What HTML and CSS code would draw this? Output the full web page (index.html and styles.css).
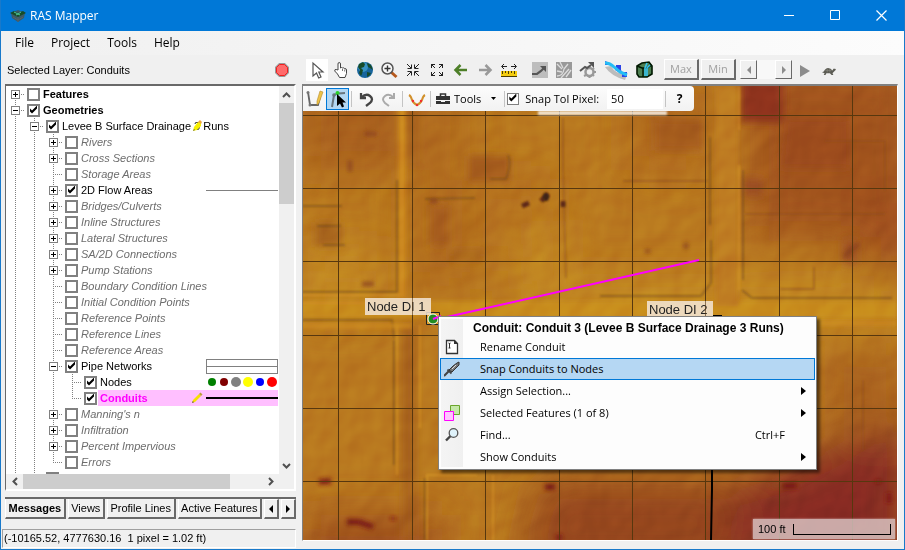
FILE: index.html
```html
<!DOCTYPE html>
<html lang="en">
<head>
<meta charset="utf-8">
<title>RAS Mapper</title>
<link rel="stylesheet" href="styles.css">
</head>
<body>
<div class="window">
  <header class="titlebar">
    <svg class="logo" width="16" height="12" viewBox="0 0 16 12"><path d="M1 3l7-3 7 3-1 5-6 4-6-4z" fill="#3a5a68"/><path d="M0 3l4-2 4 2 5-2 3 2-8 4z" fill="#164d28"/><path d="M4 2l4 2 3-2M6 5l2-1 2 1" stroke="#4ec49a" fill="none"/><path d="M3 7l5 3 5-3M8 7v5" stroke="#54636a" fill="none"/></svg>
    <h1>RAS Mapper</h1>
    <div class="winbtns">
      <button aria-label="Minimize"><svg width="11" height="11"><path d="M0 5.500h10" stroke="#fff"/></svg></button>
      <button aria-label="Maximize"><svg width="11" height="11"><path d="M.5.5h9v9h-9z" stroke="#fff" fill="none"/></svg></button>
      <button aria-label="Close"><svg width="11" height="11"><path d="M.5.5l10 10M10.500.5l-10 10" stroke="#fff" stroke-width="1.2"/></svg></button>
    </div>
  </header>
  <nav class="menubar"><button>File</button><button>Project</button><button>Tools</button><button>Help</button></nav>
  <main class="main">
    <section class="side">
      <div class="selected"><span>Selected Layer: Conduits</span>
        <svg width="14" height="14" viewBox="0 0 14 14"><path d="M4.500 1h5L13 4.500v5L9.500 13h-5L1 9.500v-5z" fill="#ff6b6b" stroke="#999" stroke-width="2"/><path d="M4.500 1.500h5l3 3v5l-3 3h-5l-3-3v-5z" fill="#ff6b6b" stroke="#f02020"/></svg>
      </div>
      <div class="treebox">
        <div class="tree">
          <ul class="root">
            <li><div class="row"><button class="exp" aria-label="Expand"></button><label><input type="checkbox"><b>Features</b></label></div></li>
            <li><div class="row"><button class="exp minus" aria-label="Collapse"></button><label><input type="checkbox" checked><b>Geometries</b></label></div>
              <ul>
                <li><div class="row"><button class="exp minus" aria-label="Collapse"></button><label><input type="checkbox" checked>Levee B Surface Drainage 3 Runs</label>
                  <svg class="pencil over" width="12" height="12" viewBox="0 0 12 12"><path d="M2 11l1-4 4-5 3 1v3l-4 4z" fill="#f7f000"/><path d="M7 2l2-2 2 2-1 2z" fill="#f2a83c"/><path d="M2 11l1-2 1 1z" fill="#555"/></svg></div>
                  <ul>
                    <li><div class="row off"><button class="exp" aria-label="Expand"></button><label><input type="checkbox">Rivers</label></div></li>
                    <li><div class="row off"><button class="exp" aria-label="Expand"></button><label><input type="checkbox">Cross Sections</label></div></li>
                    <li><div class="row off leaf"><label><input type="checkbox">Storage Areas</label></div></li>
                    <li><div class="row"><button class="exp" aria-label="Expand"></button><label><input type="checkbox" checked>2D Flow Areas</label><span class="legend thin"></span></div></li>
                    <li><div class="row off"><button class="exp" aria-label="Expand"></button><label><input type="checkbox">Bridges/Culverts</label></div></li>
                    <li><div class="row off"><button class="exp" aria-label="Expand"></button><label><input type="checkbox">Inline Structures</label></div></li>
                    <li><div class="row off"><button class="exp" aria-label="Expand"></button><label><input type="checkbox">Lateral Structures</label></div></li>
                    <li><div class="row off"><button class="exp" aria-label="Expand"></button><label><input type="checkbox">SA/2D Connections</label></div></li>
                    <li><div class="row off"><button class="exp" aria-label="Expand"></button><label><input type="checkbox">Pump Stations</label></div></li>
                    <li><div class="row off leaf"><label><input type="checkbox">Boundary Condition Lines</label></div></li>
                    <li><div class="row off leaf"><label><input type="checkbox">Initial Condition Points</label></div></li>
                    <li><div class="row off leaf"><label><input type="checkbox">Reference Points</label></div></li>
                    <li><div class="row off leaf"><label><input type="checkbox">Reference Lines</label></div></li>
                    <li><div class="row off leaf"><label><input type="checkbox">Reference Areas</label></div></li>
                    <li><div class="row"><button class="exp minus" aria-label="Collapse"></button><label><input type="checkbox" checked>Pipe Networks</label><span class="legend box"></span></div>
                      <ul>
                        <li><div class="row leaf"><label><input type="checkbox" checked>Nodes</label>
                          <svg class="legend" width="72" height="12"><circle cx="6" cy="6" r="4" fill="#008000"/><circle cx="18" cy="6" r="4" fill="#800000"/><circle cx="30" cy="6" r="5" fill="#808080"/><circle cx="42" cy="6" r="5" fill="#ff0"/><circle cx="54" cy="6" r="4" fill="#00f"/><circle cx="66" cy="6" r="5" fill="#f00"/></svg></div></li>
                        <li><div class="row leaf active"><label><input type="checkbox" checked><b>Conduits</b></label>
                          <svg class="pencil" width="12" height="12" viewBox="0 0 12 12"><path d="M1 11l1-3 6-6 2 2-6 6z" fill="#f7e000"/><path d="M8 2l1.500-1.500 2 2L10 4z" fill="#b9a03a"/><path d="M1 11l.8-2 1.200 1.200z" fill="#555"/></svg><span class="legend thick"></span></div></li>
                      </ul></li>
                    <li><div class="row off"><button class="exp" aria-label="Expand"></button><label><input type="checkbox">Manning's n</label></div></li>
                    <li><div class="row off"><button class="exp" aria-label="Expand"></button><label><input type="checkbox">Infiltration</label></div></li>
                    <li><div class="row off"><button class="exp" aria-label="Expand"></button><label><input type="checkbox">Percent Impervious</label></div></li>
                    <li><div class="row off leaf"><label><input type="checkbox">Errors</label></div></li>
                  </ul></li>
                <li><div class="row leaf"><label><input type="checkbox"></label></div></li>
              </ul></li>
          </ul>
        </div>
        <div class="vbar"><button aria-label="Up"><svg width="9" height="6"><path d="M1 5l3.500-3.500L8 5" class="chev"/></svg></button><i></i><button aria-label="Down"><svg width="9" height="6"><path d="M1 1l3.500 3.500L8 1" class="chev"/></svg></button></div>
        <div class="hbar"><button aria-label="Left"><svg width="6" height="9"><path d="M5 1L1.500 4.500 5 8" class="chev"/></svg></button><i></i><button aria-label="Right"><svg width="6" height="9"><path d="M1 1l3.500 3.500L1 8" class="chev"/></svg></button></div>
      </div>
      <div class="tabs"><button class="on">Messages</button><button>Views</button><button>Profile Lines</button><button>Active Features</button><button class="arrow" aria-label="Previous tab"><svg width="4" height="8"><path d="M4 0v8L0 4z"/></svg></button><button class="arrow" aria-label="Next tab"><svg width="4" height="8"><path d="M0 0v8l4-4z"/></svg></button></div>
      <div class="status">(-10165.52, 4777630.16&nbsp; 1 pixel = 1.02 ft)</div>
    </section>
    <section class="view">
      <div class="toolbar">
        <button class="tool picked" aria-label="Select"><svg width="22" height="22"><path d="M7 4v13l3.500-3 2.200 5 2.300-1-2.200-5H17z" fill="#fff" stroke="#555" stroke-width="1.200"/></svg></button>
        <button class="tool" aria-label="Pan"><svg width="22" height="22"><path d="M8 11V5q0-1.500 1.200-1.500T10.500 5v4q1-1 2.200 0 1.200-.6 2 .6 1.800-.2 1.800 1.400v3.500l-1.500 4H9.500L7.500 15l-2.800-3q0-2 1.500-1.500z" fill="#fff" stroke="#444"/><path d="M12.500 10v2M14.700 10.500v2" stroke="#777"/></svg></button>
        <button class="tool" aria-label="World"><svg width="22" height="22"><circle cx="11" cy="11" r="8" fill="#17659c"/><circle cx="9" cy="8" r="5" fill="#4fb3dd" opacity=".6"/><path d="M5 5l4-2 2 2-1 3-3 1 2 2-1 4-1 2-2-3 1-3-2-3zM13 4l4 2 2 5-3-2-2-1zM13 13l4 1-1 2-3 2z" fill="#174b2a"/></svg></button>
        <button class="tool" aria-label="Zoom"><svg width="22" height="22"><path d="M13.500 13.500l5 4.500" stroke="#b5581c" stroke-width="3"/><circle cx="9.500" cy="9.500" r="5.500" fill="#f8f8f8" stroke="#555" stroke-width="1.500"/><path d="M6.500 9.500h6M9.500 6.500v6" stroke="#333" stroke-width="1.400"/></svg></button>
        <button class="tool" aria-label="Zoom in"><svg width="22" height="22"><path d="M5 5l4 4M5.500 9.500h4v-4M17 5l-4 4M12.500 5.500v4h4M5 17l4-4M5.500 12.500h4v4M17 17l-4-4M16.500 12.500h-4v4" class="ln"/></svg></button>
        <button class="tool" aria-label="Zoom out"><svg width="22" height="22"><path d="M5 5l4 4M5.500 9V5.500H9M17 5l-4 4M13 5.500h3.500V9M5 17l4-4M5.500 13v3.500H9M17 17l-4-4M16.500 13v3.500H13" class="ln"/></svg></button>
        <button class="tool" aria-label="Back"><svg width="22" height="22"><path d="M17 11H6M10.500 6l-5 5 5 5" fill="none" stroke="#4d7f28" stroke-width="2.500"/></svg></button>
        <button class="tool" aria-label="Forward"><svg width="22" height="22"><path d="M5 11h11M11.500 6l5 5-5 5" fill="none" stroke="#999" stroke-width="2.500"/></svg></button>
        <button class="tool" aria-label="Measure"><svg width="22" height="22"><path d="M4 7.500h5M13 7.500h5M6 5L3.500 7.500 6 10M16 5l2.500 2.500L16 10" class="ln"/><path d="M3 12h16v6H3z" fill="#f3cc10"/><path d="M4.500 12v3M7.500 12v2M10.500 12v3M13.500 12v2M16.500 12v3M3 17.500h16" stroke="#4b3c00" fill="none"/></svg></button>
        <span class="space"></span>
        <button class="tool" aria-label="Profile"><svg width="22" height="22"><path d="M3 3h16v16H3z" fill="#bdbdbd"/><path d="M3 15h5l4-3 4-4" stroke="#555" stroke-width="2.200" fill="none"/><path d="M11 7h6v6z" fill="#555"/></svg></button>
        <button class="tool" aria-label="Velocity"><svg width="22" height="22"><path d="M3 3h16v16H3z" fill="#999"/><path d="M4 5l5 5M7 3l3 6M4 17q6 0 7-7l4-5M8 19l8-9M13 18l5-7M4 12l5 1" stroke="#ddd" fill="none" stroke-width="1.300"/></svg></button>
        <button class="tool" aria-label="Tracing"><svg width="22" height="22"><circle cx="12.500" cy="13" r="4" fill="none" stroke="#999" stroke-width="2.500"/><path d="M12.500 7v2M12.500 17v2M17 13h2M7 17l2-1M17 17l-1-1M17 9l-1 1" stroke="#999" stroke-width="2"/><path d="M3 12l5-4 2 1 4-3" stroke="#555" stroke-width="2" fill="none"/><path d="M11 3h6v6z" fill="#555"/></svg></button>
        <button class="tool wide" aria-label="Water surface"><svg width="24" height="22"><path d="M1 8q6 9 20 13l2-5q-12-1-16-9z" fill="#999" opacity=".6"/><path d="M12 6h5v5h-5zM18 13h5v5h-5z" fill="#2b43e8"/><path d="M1 2v4h5V4zM11 8l7 4v3l-7-4z" fill="#2b43e8"/><path d="M1 4q5 0 9 4l6 5 7 3" stroke="#24bdf5" stroke-width="3" fill="none"/></svg></button>
        <button class="tool" aria-label="Terrain"><svg width="22" height="22"><path d="M4 7l5-3 7-1 3 4v8l-5 3H6l-2-3z" fill="#4f8052" stroke="#001800" stroke-width="1.600"/><path d="M4 7l5 2h5l5-3M10 9v9" stroke="#001800" stroke-width="1.400" fill="none"/><path d="M14 4l-2 5v8M17 6l-3 3v8" stroke="#36c4ee" stroke-width="1.600" fill="none"/></svg></button>
        <span class="space"></span>
        <button class="classic" disabled>Max</button><button class="classic" disabled>Min</button>
        <span class="spin"><button disabled aria-label="Step back"><svg width="4" height="8"><path d="M4 0v8L0 4z"/></svg></button><i></i><button disabled aria-label="Step forward"><svg width="4" height="8"><path d="M0 0v8l4-4z"/></svg></button></span>
        <button class="tool play" aria-label="Play"><svg width="10" height="12"><path d="M0 0v12l10-6z" fill="#8c8c8c"/></svg></button>
        <button class="tool speed" aria-label="Speed"><svg width="14" height="8" viewBox="0 0 16 9"><path d="M0 6l2-1q2-4 5-4t5 3l1-2h2l1 1-1 1-2 2-1 1 1 2h-2L9 7H5L4 9H2l1-2z" fill="#5c5c54"/><path d="M4 4h7M6 2v4M9 2v4" stroke="#8a8a80" stroke-width=".7"/></svg></button>
      </div>
      <div class="map">
        <svg class="terrain" viewBox="303 86 594 454" preserveAspectRatio="xMinYMin slice">
          <defs>
            <filter id="b1" x="-50%" y="-50%" width="200%" height="200%"><feGaussianBlur stdDeviation="1"/></filter>
            <filter id="b2" x="-50%" y="-50%" width="200%" height="200%"><feGaussianBlur stdDeviation="2"/></filter>
            <filter id="b4" x="-50%" y="-50%" width="200%" height="200%"><feGaussianBlur stdDeviation="4"/></filter>
            <filter id="b25" x="-80%" y="-80%" width="260%" height="260%"><feGaussianBlur stdDeviation="20"/></filter>
            <filter id="relief" x="0" y="0" width="100%" height="100%" color-interpolation-filters="sRGB"><feTurbulence type="fractalNoise" baseFrequency=".04" numOctaves="2" seed="8"/><feDiffuseLighting surfaceScale="3" lighting-color="#fff"><feDistantLight azimuth="225" elevation="30"/></feDiffuseLighting></filter>
          </defs>
          <rect x="302" y="86" width="595" height="454" fill="#b9781f"/>
          <g filter="url(#b25)">
            <path d="M302 70h100v100H302z" fill="#a85e1f"/>
            <path d="M410 86h60v200h-60z" fill="#b06b1f"/>
            <path d="M750 60h167v180H750z" fill="#a1531f"/>
            <path d="M630 80h75v90h-75z" fill="#ae661f"/>
            <path d="M480 180h70v80h-70z" fill="#b36d1e"/>
            <path d="M302 515h140v60H302z" fill="#9c4d1d"/>
            <path d="M540 480h360v90H520z" fill="#94441c"/>
            <path d="M740 490l80-40 90-30v140H720z" fill="#872c20"/>
            <path d="M302 250h80v60H302zM515 220h45v80h-45zM560 280h337v50H560z" fill="#c48a20"/>
            <path d="M825 350h80v80h-80z" fill="#a9611d"/>
            <path d="M860 190h60v80h-60z" fill="#9f4d1e"/>
          </g>
          <g filter="url(#b4)">
            <path d="M741 80h42v42h-42z" fill="#8d321f"/>
            <path d="M785 118h65v50h-70z" fill="#9c4b1f"/>
            <path d="M468 156h42v25h-42zM430 205h18v40h-18zM655 120h48v30h-48z" fill="#a55c1f"/>
            <path d="M408 86h8v80h-8zM403 325h12v215h-12z" fill="#a55e1c"/>
            <path d="M315 222h26v25h-26zM450 250h34v10h-34z" fill="#a8651c"/>
            <path d="M743 178h20v18h-20zM843 240h14v24h-14z" fill="#9b4d20"/>
          </g>
          <g filter="url(#b2)">
            <path d="M302 301h595v17H302z" fill="#c88c1e"/>
            <path d="M398 86h8v212h-8z" fill="#cb861d"/>
            <path d="M716 86h22v220h-22z" fill="#bf7d20"/>
          </g>
          <g filter="url(#b1)" fill="none" stroke-width="2">
            <path d="M402 86v209H302M302 303h92M397 325v150M420 325v103M427 540v-65h50M493 475v65M739 165v125M739 130v-44" stroke="#d08c20" opacity=".8"/>
            <path d="M397 180v112H302M302 320h90l2 18M302 206h40M317 226h24M323 245h22M710 137v88M711 240v43l-10 13H600M742 290l10 8h140M743 170v110M425 199l50-1M508 155q4 8-2 24h-16M394 340v125M425 540v-62" stroke="#70491a" opacity=".55"/>
            <path d="M623 181h85M745 214h140M825 141h60v50M780 289h34v-22M563 118v50l3 110M863 380v70" stroke="#8b4c1a" opacity=".5"/>
          </g>
          <g filter="url(#b2)" fill="none">
            <path d="M302 326h110M706 323h191" stroke="#ce8b1f" stroke-width="4"/>
            <path d="M365 134h12M362 284h12M350 160v12M430 201h8M645 251h5M686 243v6M845 258l5-8 9-6M770 485h30" stroke="#8b421a" stroke-width="4"/>
            <path d="M319 482l12-1M347 522h12l14 5M393 520v-3M545 487h10M556 539l6-3M782 486h16M878 483v-3M889 493v10" stroke="#7b1f17" stroke-width="6"/>
          </g>
          <path d="M522 206l7-3M541 201l7-7M563 207v-6" stroke="#5b2813" stroke-width="5" filter="url(#b1)"/>
          <ellipse cx="546" cy="197" rx="3" ry="4" fill="#3d2418" filter="url(#b1)"/>
          <rect x="302" y="86" width="595" height="454" filter="url(#relief)" class="shade"/>
          <path d="M338.500 86v454M412.500 86v454M485.500 86v454M559.500 86v454M632.500 86v454M705.500 86v454M779.500 86v454M852.500 86v454M302 115.500h595M302 188.500h595M302 261.500h595M302 335.500h595M302 408.500h595M302 481.500h595" stroke="#57370e" fill="none"/>
          <path d="M712 470v19l-1 51" stroke="#000" stroke-width="2" fill="none"/>
          <path d="M713 316h9" stroke="#000" stroke-width="2"/>
          <path d="M438 319L699 260" stroke="#f0f" stroke-width="2"/>
          <path d="M426.500 312.500h13v12h-13z" fill="#dba22c" stroke="#222"/><circle cx="433" cy="319" r="5" fill="#228b22" stroke="#fff"/><path d="M433 319l8-3" stroke="#f0f" stroke-width="2"/>
          <rect x="365" y="298" width="66" height="17" class="tag"/><text x="367" y="311" class="tagtext">Node DI 1</text>
          <rect x="647" y="301" width="66" height="17" class="tag"/><text x="649" y="314" class="tagtext">Node DI 2</text>
          <path d="M412.500 298v17M705.500 301v17" stroke="#57370e" opacity=".6"/>
        </svg>
        <div class="edit">
          <button class="etool" aria-label="Draw"><svg width="20" height="20"><path d="M3 3l2 13h8l2-8" fill="none" stroke="#666" stroke-width="1.800"/><path d="M15 2l3 1-4 11-2 2v-4z" fill="#edc247" stroke="#b58b2a" stroke-width=".6"/><circle cx="3" cy="3.500" r="1.500" fill="#777"/><circle cx="5" cy="16" r="1.500" fill="#777"/></svg></button>
          <button class="etool hot" aria-label="Edit"><svg width="20" height="20"><path d="M4 18L6 6q4-2 11-2" fill="none" stroke="#687680" stroke-width="2"/><circle cx="6" cy="6" r="1.800" fill="#687680"/><circle cx="9.500" cy="4" r="2" fill="#2bd02b"/><path d="M9 5v12l3-2.500 2 4 2-1-1.500-4H18z" fill="#000"/></svg></button>
          <i class="sep"></i>
          <button class="etool" aria-label="Undo"><svg width="18" height="18"><path d="M4 3v5h5M4.500 7.500Q9 3 13 6t0 7l-4 3" fill="none" stroke="#444" stroke-width="2.300"/></svg></button>
          <button class="etool" aria-label="Redo"><svg width="18" height="18"><path d="M14 3v5H9M13.500 7.500Q9 3 5 6t0 7l4 3" fill="none" stroke="#aaa" stroke-width="2"/></svg></button>
          <i class="sep"></i>
          <button class="etool" aria-label="Profile edit"><svg width="18" height="18"><path d="M1 5q2 1 3 5 2 4 5 5 3-1 5-5 1-4 3-5" fill="none" stroke="#d2912c" stroke-width="2"/><circle cx="5" cy="11" r="1.200" fill="#f03030"/><circle cx="9" cy="15" r="1.200" fill="#f03030"/><circle cx="13" cy="11" r="1.200" fill="#f03030"/></svg></button>
          <i class="sep"></i>
          <button class="tmenu"><svg width="14" height="12"><path d="M4.500 3V1h5v2" fill="none" stroke="#333" stroke-width="1.500"/><path d="M0 3h14v4H0zM0 8h5v1h4V8h5v3H0z" fill="#333"/></svg>Tools<svg class="drop" width="5" height="3"><path d="M0 0h5L2.500 3z"/></svg></button>
          <i class="sep"></i>
          <label class="snap"><input type="checkbox" checked>Snap Tol Pixel:</label>
          <input class="num" type="text" value="50" aria-label="Snap Tol Pixel">
          <i class="sep"></i>
          <button class="etool help">?</button>
        </div>
        <div class="scale"><span>100 ft</span><i></i></div>
        <div class="context" role="menu">
          <h2>Conduit: Conduit 3 (Levee B Surface Drainage 3 Runs)</h2>
          <button role="menuitem"><svg width="16" height="16"><path d="M2.500 1.500h8l3 3v10h-11z" fill="#fff" stroke="#333" stroke-width="1.300"/><path d="M10 1v4h4z" fill="#333"/><path d="M4.500 4q1 .5 1 0 0 .5 1 0M5.500 4v5M4.500 9h2" stroke="#333" fill="none"/></svg>Rename Conduit</button>
          <button role="menuitem" class="hot"><svg width="16" height="16"><path d="M0 15l5-5" stroke="#444" stroke-width="2"/><path d="M3.500 8.500l4 4" stroke="#444" stroke-width="1.800"/><path d="M5 9l4-4 4-3 2-1v3l-3 3-4 4z" fill="#777" stroke="#333"/><path d="M8 8l4-4" stroke="#ddd"/></svg>Snap Conduits to Nodes</button>
          <button role="menuitem" class="sub">Assign Selection...</button>
          <button role="menuitem" class="sub"><svg width="16" height="16"><path d="M6.500.5h9v9h-9z" fill="#c4e8a8" stroke="#6aa52c"/><path d="M.5 6.500h9v9h-9z" fill="#ffc4ff" stroke="#f0f"/></svg>Selected Features (1 of 8)</button>
          <button role="menuitem"><svg width="16" height="16"><path d="M7 8.500l-5 5" stroke="#444" stroke-width="2.400"/><circle cx="9.500" cy="6" r="4.300" fill="#dff2fa" stroke="#555" stroke-width="1.300"/></svg>Find...<kbd>Ctrl+F</kbd></button>
          <button role="menuitem" class="sub">Show Conduits</button>
        </div>
      </div>
    </section>
  </main>
</div>
</body>
</html>
```
FILE: styles.css
```css
* { box-sizing: border-box; }
body { margin: 0; font: 11px/16px "Liberation Sans", sans-serif; color: #000; }
button { border: 0; padding: 0; margin: 0; background: none; font: inherit; color: inherit; }
svg { display: block; flex: none; }
i { font-style: normal; }
h1, h2 { margin: 0; font-size: inherit; }
ul { list-style: none; margin: 0; padding: 0; }

.window { height: 100vh; display: flex; flex-direction: column; border: 1px solid #1979ca; border-top: 0; background: #f0f0f0; overflow: hidden; }
.titlebar { height: 31px; flex: none; display: flex; align-items: center; padding-left: 9px; gap: 4px; background: #0078d7; color: #fff; font: 12px/16px "Open Sans", sans-serif; }
.titlebar h1 { font-weight: 400; }
.winbtns { margin-left: auto; display: flex; }
.winbtns button { width: 46px; height: 31px; display: grid; place-items: center; }
.menubar { height: 24px; flex: none; display: flex; align-items: center; gap: 17px; padding-left: 14px; background: linear-gradient(90deg, #f0f0f0, #fcfcfc); font: 12px/16px "Open Sans", sans-serif; }

.main { flex: 1; min-height: 0; display: grid; grid-template: minmax(0, 1fr) / 295px minmax(0, 1fr); column-gap: 6px; }
.side { display: flex; flex-direction: column; min-height: 0; padding-bottom: 1px; }
.selected { height: 29px; flex: none; display: flex; align-items: center; justify-content: space-between; padding: 0 7px 0 6px; }

.treebox { flex: 1; min-height: 0; margin-left: 4px; display: grid; grid-template: minmax(0, 1fr) 15px / minmax(0, 1fr) 15px; border: 1px solid #fff; border-width: 2px 2px 2px 1px; border-top-color: #696969; border-left-color: #696969; background: #f0f0f0; }
.tree { background: #fff; overflow: hidden; padding: 0 1px 0 5px; }
.tree ul { background: repeating-linear-gradient(#808080 0 1px, transparent 1px 2px) 4px 0 / 1px calc(100% - 8px) no-repeat; }
.tree .root { padding-bottom: 24px; background-position: 4px 8px; }
.tree ul ul { margin-left: 19px; }
.row { position: relative; height: 16px; display: flex; align-items: center; white-space: nowrap; background: repeating-linear-gradient(90deg, #808080 0 1px, transparent 1px 2px) 4px 8px / 10px 1px no-repeat; }
.row label { display: flex; align-items: center; gap: 3px; height: 16px; }
.leaf { padding-left: 16px; }
.off label { color: #6d6d6d; font-style: italic; }
.exp { width: 9px; height: 9px; margin-right: 7px; flex: none; border: 1px solid #808080; background: linear-gradient(#000, #000) 1px 3px / 5px 1px no-repeat, linear-gradient(#000, #000) 3px 1px / 1px 5px no-repeat, #fff; }
.exp.minus { background: linear-gradient(#000, #000) 1px 3px / 5px 1px no-repeat, #fff; }
input[type="checkbox"] { appearance: none; flex: none; margin: 0; width: 13px; height: 13px; border: 2px solid #808080; background: #fff; }
input[type="checkbox"]:checked::before { content: ""; display: block; width: 9px; height: 9px; background: #000; clip-path: polygon(1px 3px, 3px 5px, 8px 0, 8px 3px, 3px 8px, 1px 6px); }
.legend { margin-left: auto; width: 72px; }
.thin { border-top: 1px solid #808080; }
.box { height: 15px; border: 1px solid #808080; background: linear-gradient(#808080, #808080) 0 6px / 100% 1px no-repeat; }
.thick { border-top: 2px solid #000; }
.pencil { margin-left: auto; }
.pencil + .legend { margin-left: 3px; }
.pencil.over { position: absolute; right: 75px; }
.active::before { content: ""; position: absolute; inset: 0 0 0 30px; background: #ffbfff; }
.active > * { position: relative; }
.active label { color: #f0f; }

.vbar, .hbar { display: flex; align-items: center; background: #f0f0f0; }
.vbar { flex-direction: column; }
.vbar button { height: 17px; }
.vbar button:last-child { margin-top: auto; }
.hbar button { width: 17px; }
.hbar button:last-child { margin-left: auto; }
.vbar i { width: 15px; height: 26%; background: #cdcdcd; }
.hbar i { height: 15px; width: 76%; background: #cdcdcd; }
.vbar button, .hbar button { display: grid; place-items: center; }
.chev { fill: none; stroke: #505050; stroke-width: 2; }

.tabs { flex: none; margin: 6px 0 10px 4px; border-top: 2px solid #696969; display: flex; align-items: flex-start; height: 22px; gap: 2px; }
.tabs button { flex: auto; height: 20px; border: 1px solid #696969; border-width: 0 2px 2px 0; border-left: 1px solid #fff; white-space: nowrap; }
.tabs .on { font-weight: 700; }
.tabs .arrow { flex: 0 0 15px; border-top: 1px solid #fff; display: grid; place-items: center; }
.status { flex: none; margin-left: 1px; height: 19px; line-height: 16px; padding-left: 1px; border: 1px solid #fff; border-top-color: #a0a0a0; border-left-color: #a0a0a0; white-space: nowrap; }

.view { display: flex; flex-direction: column; min-width: 0; padding: 0 6px 8px 0; }
.toolbar { height: 29px; flex: none; display: flex; align-items: center; gap: 2px; padding-left: 4px; }
.tool { width: 22px; height: 22px; display: grid; place-items: center; }
.picked { background: #fff; }
.wide { width: 30px; }
.space { width: 5px; }
.toolbar .play, .toolbar .speed { padding-top: 3px; }
.ln { fill: none; stroke: #222; stroke-width: 1; }
.classic { width: 35px; height: 21px; border: 2px solid #696969; border-top: 1px solid #fff; border-left: 1px solid #fff; color: #a0a0a0; font: 11px/16px "Open Sans", sans-serif; }
.spin { display: flex; margin-left: 2px; height: 19px; background: #f8f8f8; }
.spin i { width: 18px; }
.spin button { width: 17px; border: 1px solid #696969; border-top-color: #fff; border-left-color: #fff; background: #f0f0f0; display: grid; place-items: center; fill: #8c8c8c; }

.map { position: relative; flex: 1; min-height: 0; border: 1px solid #fff; border-width: 2px 1px 1px; border-top-color: #808080; border-left-color: #808080; }
.terrain { position: absolute; inset: 0; width: 100%; height: 100%; }
.shade { mix-blend-mode: overlay; opacity: .14; }
.tag { fill: #f3e6d8; fill-opacity: .85; }
.tagtext { font: 13px "Liberation Sans", sans-serif; fill: #222; }

.edit { position: relative; width: max-content; height: 25px; display: flex; align-items: center; padding: 0 3px 0 0; border-radius: 0 4px 4px 0; background: linear-gradient(#fcfcfc, #f2f2f2); font: 11px/16px "Open Sans", sans-serif; }
.edit::after { content: ""; position: absolute; left: 60%; right: 7%; top: 25px; height: 4px; background: #fffc; filter: blur(1px); }
.etool { width: 23px; height: 22px; display: grid; place-items: center; }
.etool.hot { border: 1px solid #0078d7; background: #b3d7f3; }
.sep { width: 1px; height: 16px; margin: 0 2px; background: #c4c4c4; }
.tmenu { display: flex; align-items: center; gap: 4px; padding: 0 6px 0 3px; }
.drop { margin-left: 6px; }
.snap { display: flex; align-items: center; gap: 6px; }
.snap input[type="checkbox"] { width: 12px; height: 12px; border-width: 1px; }
.num { width: 56px; height: 20px; margin-left: 8px; border: 0; padding: 0 4px; background: #fff; font: 11px "Open Sans", sans-serif; }
.help { font-weight: 700; font-size: 12px; }

.scale { position: absolute; right: 2px; bottom: 1px; width: 142px; height: 20px; display: flex; align-items: center; gap: 7px; padding: 0 4px 0 5px; background: #dcccccc8; box-shadow: 0 0 2px #dcccccc8; }
.scale i { flex: 1; height: 11px; border: 1px solid #000; border-top: 0; }

.context { position: absolute; left: 135px; top: 230px; width: 379px; padding: 1px; border: 1px solid #808080; background: linear-gradient(90deg, #f4f4f4, #f0f0f0) 2px 2px / 22px calc(100% - 4px) no-repeat #fdfdfd; box-shadow: 3px 3px 3px #0008; font: 11px/16px "Open Sans", sans-serif; }
.context h2 { height: 18px; padding: 2px 0 0 33px; font: bold 12px/16px "Liberation Sans", sans-serif; white-space: nowrap; }
.context button { position: relative; width: 100%; height: 22px; display: flex; align-items: center; padding: 0 29px 0 39px; border: 1px solid transparent; }
.context button svg { position: absolute; left: 3px; }
.context .hot { border-color: #0078d7; background: #b5d7f3; }
.context kbd { margin-left: auto; font: inherit; }
.sub::after { content: ""; position: absolute; right: 8px; border: 4px solid transparent; border-left: 5px solid #000; border-right: 0; }
```
